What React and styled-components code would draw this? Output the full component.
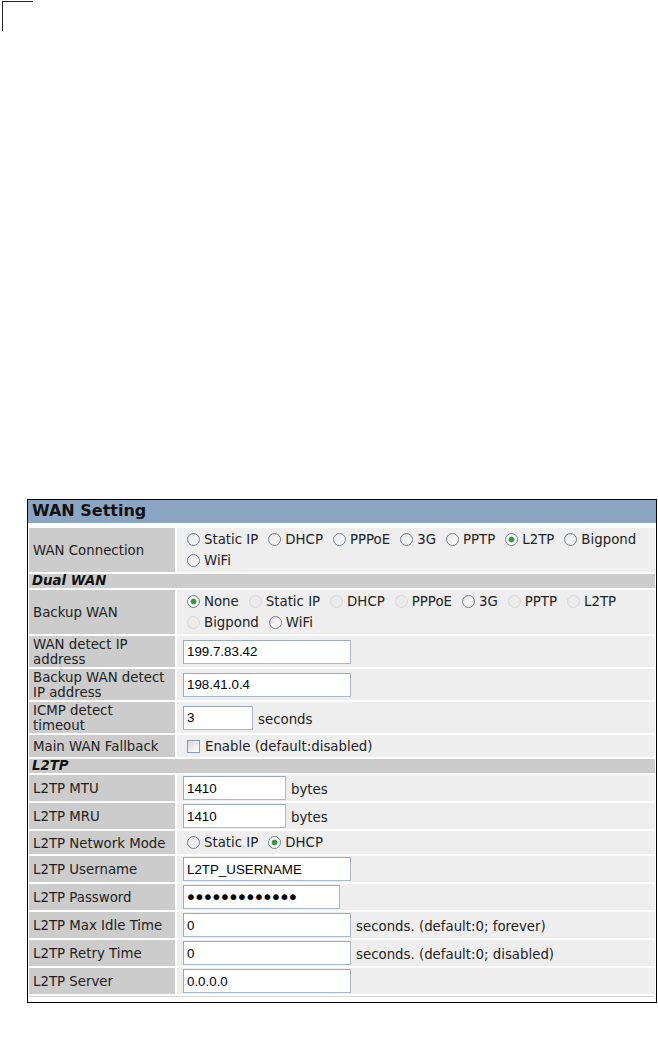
import React from 'react';
import styled, { createGlobalStyle } from 'styled-components';

const GlobalStyle = createGlobalStyle`
  html, body { margin: 0; padding: 0; background: #fff; }
  body { font-family: "DejaVu Sans", Verdana, sans-serif; color: #222; }
`;

const Page = styled.div`
  padding-top: 1px;
`;

const CropMark = styled.div`
  margin-left: 2px;
  width: 30px;
  height: 29px;
  border-top: 1px solid #222;
  border-left: 1px solid #222;
`;

const Panel = styled.section`
  margin: 468px 0 0 27px;
  width: 630px;
  box-sizing: border-box;
  border: 1px solid #000;
  background: #fff;
`;

const TitleBar = styled.h2`
  margin: 0;
  height: 23px;
  box-sizing: border-box;
  padding: 1px 0 0 4px;
  line-height: 22px;
  background: #8ba6c2;
  font: bold 16px "DejaVu Sans", Verdana, sans-serif;
  color: #111;
`;

const Grid = styled.div`
  display: grid;
  grid-template-columns: 146px 1fr;
  gap: 2px;
  padding: 5px 1px 5px;
`;

const Label = styled.div`
  background: #cccccc;
  padding: 1px 4px 0;
  display: flex;
  align-items: center;
  font-size: 13.33px;
  line-height: 15px;
  white-space: nowrap;
  color: #222;
`;

const Value = styled.div`
  background: #eeeeee;
  padding: 1px 6px;
  display: flex;
  flex-direction: column;
  justify-content: center;
  font-size: 13.33px;
  color: #222;
`;

const Section = styled.div`
  grid-column: 1 / -1;
  background: #cccccc;
  padding-left: 3px;
  height: 14px;
  line-height: 14px;
  font-size: 13.33px;
  font-weight: bold;
  font-style: italic;
  color: #111;
`;

const FooterLine = styled.div`
  grid-column: 1 / -1;
  height: 1px;
  background: #d4d4d4;
`;

const ChoiceLine = styled.div`
  display: flex;
  align-items: center;
  height: 21px;
  gap: 6px;
  white-space: nowrap;
`;

const Choice = styled.label`
  display: inline-flex;
  align-items: center;
`;

const CheckLine = styled.label`
  display: flex;
  align-items: center;
  height: 20px;
  white-space: nowrap;
`;

const Radio = styled.input.attrs({ type: 'radio' })`
  appearance: none;
  -webkit-appearance: none;
  box-sizing: border-box;
  width: 13px;
  height: 13px;
  margin: 0 4px;
  flex: none;
  border-radius: 50%;
  border: 1px solid #6d7d92;
  background: linear-gradient(135deg, #e4e4e4, #ffffff);

  &:checked {
    background: radial-gradient(circle, #2f9c34 0 2.3px, #8fbf90 2.8px, #fff 3.4px);
  }
  &:disabled {
    border-color: #d6d6d6;
    background: #ebebeb;
  }
`;

const Checkbox = styled.input.attrs({ type: 'checkbox' })`
  appearance: none;
  -webkit-appearance: none;
  box-sizing: border-box;
  width: 13px;
  height: 13px;
  margin: 0 5px 0 4px;
  flex: none;
  border: 1px solid #8a9ab0;
  background: linear-gradient(135deg, #d8d8d8, #ffffff);
`;

const FieldLine = styled.div`
  display: flex;
  align-items: flex-end;
  white-space: nowrap;
`;

const TextInput = styled.input`
  box-sizing: border-box;
  width: ${(p) => p.$w}px;
  height: 24px;
  margin: 0;
  padding: 0 3px;
  border: 1px solid #a6b9ce;
  border-top-color: #99aac0;
  border-left-color: #99aac0;
  background: #fff;
  font: 13.33px "Liberation Sans", Arial, sans-serif;
  color: #000;
  outline: none;
`;

const PasswordInput = styled(TextInput).attrs({ type: 'password' })`
  font: 20px "DejaVu Sans", Verdana, sans-serif;
  letter-spacing: -3.3px;
  padding-left: 1px;
`;

const Unit = styled.span`
  margin: 0 0 2px 5px;
  line-height: 16px;
`;

const RadioRow = ({ name, lines }) => (
  <>
    {lines.map((line, i) => (
      <ChoiceLine key={i}>
        {line.map((c) => (
          <Choice key={c.label}>
            <Radio name={name} defaultChecked={!!c.checked} disabled={!!c.disabled} />
            {c.label}
          </Choice>
        ))}
      </ChoiceLine>
    ))}
  </>
);

const Field = ({ w, value, unit, password }) => (
  <FieldLine>
    {password ? (
      <PasswordInput $w={w} defaultValue={value} />
    ) : (
      <TextInput $w={w} type="text" defaultValue={value} />
    )}
    {unit && <Unit>{unit}</Unit>}
  </FieldLine>
);

export default function App() {
  return (
    <Page>
      <GlobalStyle />
      <CropMark />
      <Panel>
        <TitleBar>WAN Setting</TitleBar>
        <Grid>
          <Label>WAN Connection</Label>
          <Value>
            <RadioRow
              name="wan"
              lines={[
                [
                  { label: 'Static IP' },
                  { label: 'DHCP' },
                  { label: 'PPPoE' },
                  { label: '3G' },
                  { label: 'PPTP' },
                  { label: 'L2TP', checked: true },
                  { label: 'Bigpond' },
                ],
                [{ label: 'WiFi' }],
              ]}
            />
          </Value>

          <Section>Dual WAN</Section>

          <Label>Backup WAN</Label>
          <Value>
            <RadioRow
              name="backup"
              lines={[
                [
                  { label: 'None', checked: true },
                  { label: 'Static IP', disabled: true },
                  { label: 'DHCP', disabled: true },
                  { label: 'PPPoE', disabled: true },
                  { label: '3G' },
                  { label: 'PPTP', disabled: true },
                  { label: 'L2TP', disabled: true },
                ],
                [{ label: 'Bigpond', disabled: true }, { label: 'WiFi' }],
              ]}
            />
          </Value>

          <Label>
            WAN detect IP
            <br />
            address
          </Label>
          <Value>
            <Field w={168} value="199.7.83.42" />
          </Value>

          <Label>
            Backup WAN detect
            <br />
            IP address
          </Label>
          <Value>
            <Field w={168} value="198.41.0.4" />
          </Value>

          <Label>
            ICMP detect
            <br />
            timeout
          </Label>
          <Value>
            <Field w={70} value="3" unit="seconds" />
          </Value>

          <Label>Main WAN Fallback</Label>
          <Value>
            <CheckLine>
              <Checkbox />
              Enable (default:disabled)
            </CheckLine>
          </Value>

          <Section>L2TP</Section>

          <Label>L2TP MTU</Label>
          <Value>
            <Field w={103} value="1410" unit="bytes" />
          </Value>

          <Label>L2TP MRU</Label>
          <Value>
            <Field w={103} value="1410" unit="bytes" />
          </Value>

          <Label>L2TP Network Mode</Label>
          <Value>
            <RadioRow
              name="mode"
              lines={[[{ label: 'Static IP' }, { label: 'DHCP', checked: true }]]}
            />
          </Value>

          <Label>L2TP Username</Label>
          <Value>
            <Field w={168} value="L2TP_USERNAME" />
          </Value>

          <Label>L2TP Password</Label>
          <Value>
            <Field w={157} value="l2tppassword1" password />
          </Value>

          <Label>L2TP Max Idle Time</Label>
          <Value>
            <Field w={168} value="0" unit="seconds. (default:0; forever)" />
          </Value>

          <Label>L2TP Retry Time</Label>
          <Value>
            <Field w={168} value="0" unit="seconds. (default:0; disabled)" />
          </Value>

          <Label>L2TP Server</Label>
          <Value>
            <Field w={168} value="0.0.0.0" />
          </Value>

          <FooterLine />
        </Grid>
      </Panel>
    </Page>
  );
}
